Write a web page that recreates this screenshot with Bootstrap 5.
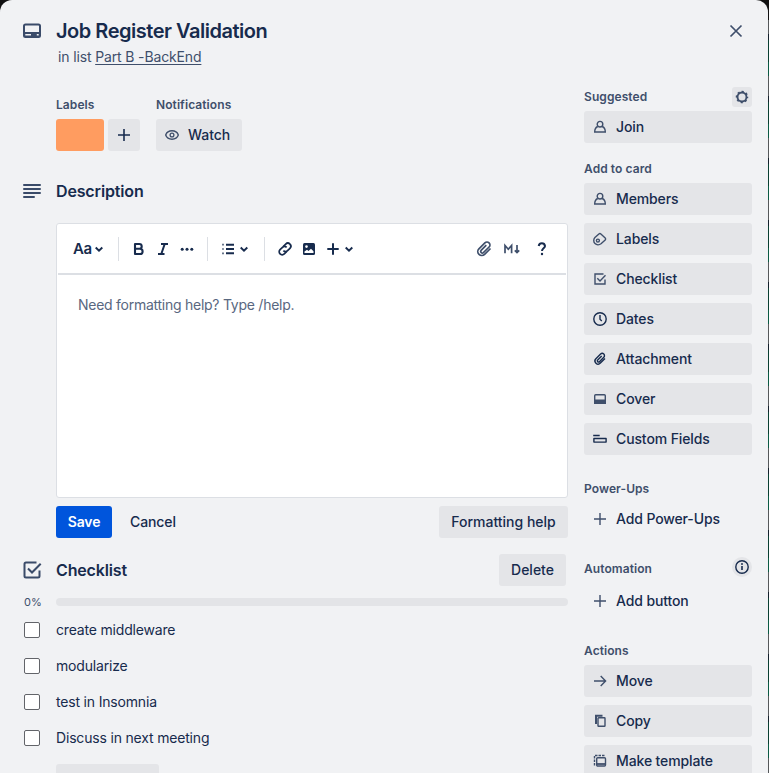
<!DOCTYPE html>
<html lang="en">
<head>
<meta charset="utf-8">
<meta name="viewport" content="width=device-width, initial-scale=1">
<title>Job Register Validation</title>
<link href="https://cdn.jsdelivr.net/npm/bootstrap@5.3.0/dist/css/bootstrap.min.css" rel="stylesheet">
<style>
html,body{height:773px;overflow:hidden}
body{font:400 14px/20px Inter,"Liberation Sans",sans-serif;color:#172b4d}
.strip{background:linear-gradient(#111 20px,transparent 20px),repeating-linear-gradient(#0b5a43 0 14px,#55585a 14px 34px,#14202c 34px 40px,#0a3f31 40px 62px)}
.panel{width:768px;height:773px;background:#f1f2f4;border-radius:12px 12px 0 0}
.soft{color:#3f4f6b}
svg{display:block;fill:none;stroke:currentColor;stroke-width:1.5;flex:none;overflow:visible}
svg .f{fill:currentColor;stroke:none}
svg .hole{fill:#f1f2f4;stroke:none}
svg .white{fill:#fff;stroke:none}
.top{padding-top:19px}
.close-x{margin-right:20px}
.gutter{width:56px;flex:none;color:#3a4b69;padding-left:20px}
.title{font-size:20px;line-height:24px;font-weight:600;letter-spacing:-.48px}
.sub{margin:4px 0 0 58px;color:#3f4f6b;letter-spacing:-.14px}
.sub span{text-decoration:underline;text-underline-offset:2px}
.cap{font-size:12px;line-height:16px;font-weight:600;color:#3f4f6b;letter-spacing:.08px}
.head{font-size:16px;line-height:24px;font-weight:600;letter-spacing:-.15px}
.main-col{width:568px;flex:none;padding-top:30px}
.meta{padding-left:56px;gap:16px;margin-bottom:28px}
.meta .cap{margin-bottom:6px}
.side{width:168px;margin-left:16px;flex:none;padding-top:20px}
.btn{--bs-btn-font-size:14px;--bs-btn-line-height:20px;--bs-btn-font-weight:500;--bs-btn-color:#172b4d;--bs-btn-padding-y:0;--bs-btn-padding-x:0;--bs-btn-border-width:0;--bs-btn-border-radius:3px;height:32px;font-family:inherit}
.grey{--bs-btn-bg:#e4e5e8;--bs-btn-hover-bg:#d8dade}
.save{--bs-btn-bg:#0055dc;--bs-btn-color:#fff;--bs-btn-hover-bg:#0044b5;--bs-btn-font-weight:600;width:56px;letter-spacing:-.1px}
.cancel{margin-left:18px;letter-spacing:-.1px}
.plus{width:32px}
.watch{width:86px;padding-left:8px;gap:8px;letter-spacing:-.05px}
.help{width:129px}
.delete{width:67px;margin-right:2px}
.add-item{width:103px;margin:8px 0 0 56px}
.side .btn{width:168px;padding:0 8px;display:flex;align-items:center;gap:8px;letter-spacing:-.12px}
.side .btn svg{width:16px;height:16px;color:#3f4f6b;stroke-width:1.4}
.side .btn svg.dk{color:#172b4d}
.stack{display:grid;gap:8px}
.cap.group{margin:18px 0 6px}
.cap.far{margin:26px 0 6px}
.auto{margin:22px 0 8px}
.swatch{width:48px;height:32px;border-radius:3px;background:#ff9c60}
.desc{margin:20px 0 0 56px}
.editor{height:275px;border:1px solid #dcdfe4;border-radius:3px;background:#fff}
.tools{height:51px;margin:0 1px;border-bottom:2px solid #dcdfe4;padding:0 15px}
.sep{width:1px;height:24px;margin:0 14px;background:#dcdfe4;flex:none}
.aa{width:21px;font-size:15px;letter-spacing:-.3px}
.bold{margin-left:0}
.ital{margin-left:12px}
.more{margin-left:11px;margin-right:-1px}
.bullet{margin-left:-1px}
.chev{margin-left:4px;margin-right:1px}
.link{margin-left:-2px}
.pic{margin-left:9px}
.ins{margin-left:10px}
.md{margin-left:11px}
.q{margin:0 3px 0 15px}
.hint{padding:20px 21px;color:#596780;letter-spacing:-.26px}
.meter{height:8px;margin:12px 0 6px}
.pct{width:56px;flex:none;font-size:11px;color:#3f4f6b;padding-left:24px}
.progress{--bs-progress-height:8px;--bs-progress-bg:#e3e4e7;--bs-progress-border-radius:4px;width:512px}
.item{height:36px;letter-spacing:-.18px}
.form-check-input[type=checkbox]{width:16px;height:16px;margin:0 0 0 4px;border:1px solid #626469;border-radius:2px}
.mini{width:20px;height:20px;background:#e4e5e8;border-radius:3px}
</style>
<script src="https://cdn.jsdelivr.net/npm/bootstrap@5.3.0/dist/js/bootstrap.bundle.min.js"></script>
</head>
<body>
<div class="strip">
<div class="panel overflow-hidden">
  <header class="top d-flex align-items-center">
    <div class="gutter"><svg width="24" height="24" viewBox="0 0 24 24"><rect x="4" y="5.500" width="16" height="12.500" rx="1.500" stroke-width="2"/><path class="f" d="M4 13h16v5H4z"/><path class="hole" d="M5.300 15h5.700v1.600H5.300zM16.800 15h1.900v1.600h-1.900z"/></svg></div>
    <h1 class="title m-0 flex-grow-1">Job Register Validation</h1>
    <svg class="close-x soft" width="24" height="24" viewBox="0 0 24 24"><path d="m6.500 6.500 11 11m0-11-11 11" stroke-width="1.700"/></svg>
  </header>
  <p class="sub mb-0">in list <span>Part B -BackEnd</span></p>
  <div class="d-flex">
    <main class="main-col">
      <div class="meta d-flex">
        <div><div class="cap">Labels</div>
          <div class="d-flex gap-1"><div class="swatch"></div>
            <button class="btn grey plus d-flex align-items-center justify-content-center"><svg width="14" height="14" viewBox="0 0 14 14"><path d="M7 1v12M1 7h12" stroke-width="1.600"/></svg></button></div></div>
        <div><div class="cap">Notifications</div>
          <button class="btn grey watch d-flex align-items-center"><svg class="soft" width="16" height="16" viewBox="0 0 16 16"><path d="M1.700 8C2.700 5.200 5 3.800 8 3.800S13.300 5.200 14.300 8C13.300 10.800 11 12.200 8 12.200S2.700 10.800 1.700 8z" stroke-width="1.400"/><circle cx="8" cy="8" r="1.900" stroke-width="1.300"/></svg>Watch</button></div>
      </div>
      <div class="d-flex align-items-center">
        <div class="gutter"><svg width="24" height="24" viewBox="0 0 24 24"><path d="M4 6h16M4 10h16M4 14h16M4 18h10" stroke-width="2" stroke-linecap="round"/></svg></div>
        <h2 class="head m-0">Description</h2>
      </div>
      <div class="desc">
        <div class="editor">
          <div class="tools d-flex align-items-center">
            <span class="fw-semibold aa">Aa</span>
            <svg width="10" height="10" viewBox="0 0 10 10"><path d="m1.700 3.500 3.300 3.200 3.300-3.200" stroke-width="1.900"/></svg>
            <i class="sep"></i>
            <svg class="bold" width="12" height="14" viewBox="0 0 12 14"><path d="M2 2h4.300a2.300 2.300 0 0 1 0 4.800H2zm0 4.800h5a2.600 2.600 0 0 1 0 5.200H2z" stroke-width="2.100" stroke-linejoin="round"/></svg>
            <svg class="ital" width="12" height="14" viewBox="0 0 12 14"><path d="M4 2h7M1 12h6.500M7.700 2 4.300 12" stroke-width="2"/></svg>
            <svg class="more" width="14" height="14" viewBox="0 0 14 14"><g class="f"><circle cx="2.200" cy="7.300" r="1.500"/><circle cx="7" cy="7.300" r="1.500"/><circle cx="11.800" cy="7.300" r="1.500"/></g></svg>
            <i class="sep"></i>
            <svg class="bullet" width="14" height="14" viewBox="0 0 14 14"><path d="M5 2.700h8M5 7h8M5 11.300h8" stroke-width="1.900"/><path d="M1 2.700h2M1 7h2M1 11.300h2" stroke-width="1.700" opacity=".65"/></svg>
            <svg class="chev" width="10" height="10" viewBox="0 0 10 10"><path d="m1.700 3.500 3.300 3.200 3.300-3.200" stroke-width="1.900"/></svg>
            <i class="sep"></i>
            <svg class="link" width="16" height="16" viewBox="0 0 16 16"><g transform="rotate(-45 8 8)" stroke-width="1.700"><path d="M7.500 11H4a3 3 0 0 1 0-6h3.400a3 3 0 0 1 2.900 3"/><path d="M8.500 5H12a3 3 0 0 1 0 6H8.600a3 3 0 0 1-2.900-3"/></g></svg>
            <svg class="pic" width="14" height="14" viewBox="0 0 14 14"><rect class="f" x="1" y="1" width="12" height="12" rx="1.500"/><circle class="white" cx="4.500" cy="4.600" r="1.300"/><path class="white" d="M2.500 11V9.600L5 7.800l1.500 1.300L9 6.700l2.500 2.500V11z"/></svg>
            <svg class="ins" width="14" height="14" viewBox="0 0 14 14"><path d="M7 1.300v11.400M1.300 7h11.400" stroke-width="2"/></svg>
            <svg class="chev" width="10" height="10" viewBox="0 0 10 10"><path d="m1.700 3.500 3.300 3.200 3.300-3.200" stroke-width="1.900"/></svg>
            <svg class="ms-auto soft" width="16" height="16" viewBox="0 0 16 16"><path d="M14.500 7.500 8.600 13.300a3.900 3.900 0 0 1-5.700-5.500l6-5.900a2.900 2.900 0 0 1 4.200 4.100l-5.700 5.600a1.600 1.600 0 0 1-2.300-2.200l5.200-5.200" stroke-width="1.700"/></svg>
            <svg class="md soft" width="18" height="14" viewBox="0 0 18 14"><path d="M2 11.300V3.500L5.300 7.300 8.600 3.500v7.800" stroke-width="1.700"/><path d="M14 3v7.500M11.800 8.300l2.200 2.300 2.200-2.300" stroke-width="1.700"/></svg>
            <svg class="q" width="12" height="16" viewBox="0 0 12 16"><path d="M2.700 5A3.200 3.200 0 0 1 9 5c0 2.400-3 2.300-3 5" stroke-width="2"/><circle class="f" cx="6" cy="13" r="1.200"/></svg>
          </div>
          <div class="hint">Need formatting help? Type /help.</div>
        </div>
        <div class="d-flex mt-2">
          <button class="btn save">Save</button>
          <button class="btn cancel">Cancel</button>
          <button class="btn grey help ms-auto">Formatting help</button>
        </div>
      </div>
      <div class="d-flex align-items-center mt-3">
        <div class="gutter"><svg width="24" height="24" viewBox="0 0 24 24"><path d="M16.500 4.500H6A1.500 1.500 0 0 0 4.500 6v12A1.500 1.500 0 0 0 6 19.500h12a1.500 1.500 0 0 0 1.500-1.500v-5.500M8 10.500l4 4 8.700-8.800" stroke-width="2"/></svg></div>
        <h2 class="head m-0">Checklist</h2>
        <button class="btn grey delete ms-auto">Delete</button>
      </div>
      <div class="meter d-flex align-items-center">
        <span class="pct">0%</span>
        <div class="progress" role="progressbar" aria-valuenow="0" aria-valuemin="0" aria-valuemax="100"><div class="progress-bar" style="width:0%"></div></div>
      </div>
      <div class="item d-flex align-items-center"><div class="gutter"><input class="form-check-input d-block" type="checkbox"></div>create middleware</div>
      <div class="item d-flex align-items-center"><div class="gutter"><input class="form-check-input d-block" type="checkbox"></div>modularize</div>
      <div class="item d-flex align-items-center"><div class="gutter"><input class="form-check-input d-block" type="checkbox"></div>test in Insomnia</div>
      <div class="item d-flex align-items-center"><div class="gutter"><input class="form-check-input d-block" type="checkbox"></div>Discuss in next meeting</div>
      <button class="btn grey add-item d-block"></button>
    </main>
    <aside class="side">
      <div class="d-flex align-items-center justify-content-between mb-1"><span class="cap">Suggested</span>
        <span class="mini d-flex align-items-center justify-content-center"><svg class="soft" width="14" height="14" viewBox="0 0 14 14"><circle cx="7" cy="7" r="4.500" stroke-width="1.900"/><circle cx="7" cy="7" r="5.400" stroke-width="1.700" stroke-dasharray="2.100 2.141" stroke-dashoffset="1"/></svg></span></div>
      <button class="btn grey"><svg viewBox="0 0 16 16"><circle cx="8" cy="5.200" r="2.800"/><path d="M5.800 7.500C3.600 8.300 2.700 10.500 2.700 13h10.600c0-2.500-.9-4.700-3.100-5.500"/></svg>Join</button>
      <div class="cap group">Add to card</div>
      <div class="stack">
        <button class="btn grey"><svg viewBox="0 0 16 16"><circle cx="8" cy="5.200" r="2.800"/><path d="M5.800 7.500C3.600 8.300 2.700 10.500 2.700 13h10.600c0-2.500-.9-4.700-3.100-5.500"/></svg>Members</button>
        <button class="btn grey"><svg viewBox="0 0 16 16"><path d="M2.900 6.600 6.900 2.900a1.500 1.500 0 0 1 2 0l4.300 4.100a1.300 1.300 0 0 1 0 1.900L9 12.800C7.200 14.200 4.500 14 3 12.600S1.200 8.300 2.900 6.600z"/><circle cx="5.900" cy="9.600" r="1.500"/></svg>Labels</button>
        <button class="btn grey"><svg viewBox="0 0 16 16"><path d="M11.500 3H3v10h10V8.500M5.300 7.300 8 10l5.500-5.700"/></svg>Checklist</button>
        <button class="btn grey"><svg class="dk" viewBox="0 0 16 16"><circle cx="8" cy="8" r="6.200"/><path d="M8 4v4.300l1.800 1.600"/></svg>Dates</button>
        <button class="btn grey"><svg class="dk" viewBox="0 0 16 16"><path d="m13 7.500-4.600 4.600a3.100 3.100 0 0 1-4.500-4.400l4.700-4.600a2.200 2.200 0 0 1 3.200 3.200l-4.400 4.400a1.200 1.200 0 0 1-1.700-1.700l4-4"/></svg>Attachment</button>
        <button class="btn grey"><svg viewBox="0 0 16 16"><rect x="2.700" y="3.700" width="10.600" height="8.600" rx="1"/><path class="f" d="M2 8.500h12V13H2z"/></svg>Cover</button>
        <button class="btn grey"><svg class="dk" viewBox="0 0 16 16"><path d="M1.200 4.500h6.500M1.900 7.500h12.200v3.600H1.900z" stroke-linejoin="round"/></svg>Custom Fields</button>
      </div>
      <div class="cap far">Power-Ups</div>
      <button class="btn"><svg viewBox="0 0 16 16"><path d="M8 2v12M2 8h12"/></svg>Add Power-Ups</button>
      <div class="auto d-flex justify-content-between"><span class="cap pt-1">Automation</span>
        <span class="mini rounded-circle d-flex align-items-center justify-content-center"><svg width="16" height="16" viewBox="0 0 16 16"><circle cx="8" cy="8" r="6.200" stroke-width="1.400"/><path d="M8 7v4" stroke-width="1.600"/><circle class="f" cx="8" cy="5" r=".95"/></svg></span></div>
      <button class="btn"><svg viewBox="0 0 16 16"><path d="M8 2v12M2 8h12"/></svg>Add button</button>
      <div class="cap far">Actions</div>
      <div class="stack">
        <button class="btn grey"><svg viewBox="0 0 16 16"><path d="M2 8h11.300M8.700 3l4.900 5-4.900 5"/></svg>Move</button>
        <button class="btn grey"><svg viewBox="0 0 16 16"><rect x="6" y="4.700" width="7" height="8.600" rx=".6"/><path d="M4 11V2.700h6.500" stroke-width="2"/></svg>Copy</button>
        <button class="btn grey"><svg viewBox="0 0 16 16"><rect x="4.700" y="4.700" width="8.800" height="8.300" rx="1"/><path d="M5 11h8.500" stroke-width="1.800"/><path d="M2.500 12.500V2.500H13" stroke-dasharray="2.500 1"/></svg>Make template</button>
      </div>
    </aside>
  </div>
</div>
</div>
</body>
</html>
